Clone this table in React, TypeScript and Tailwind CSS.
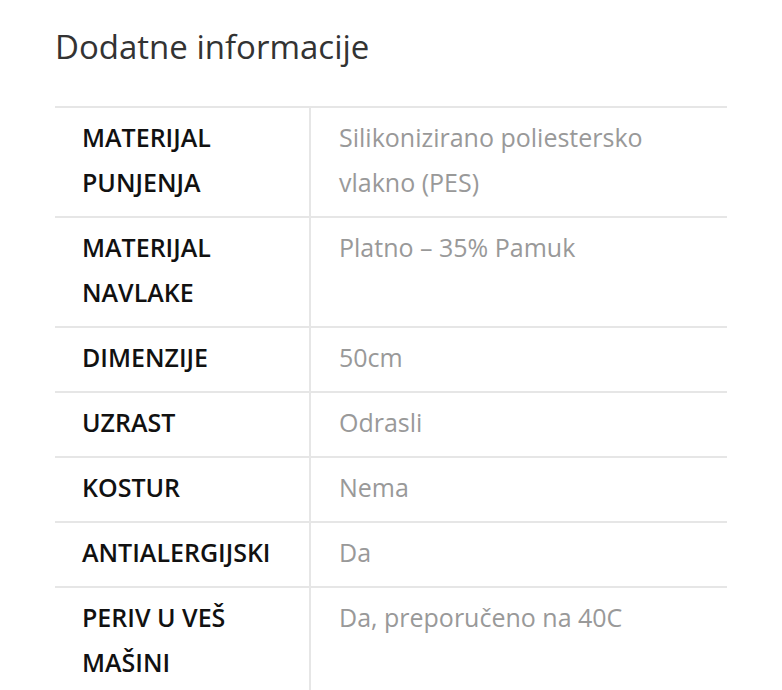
import React from "react";

type Row = { label: string; value: string };

const ROWS: Row[] = [
  { label: "MATERIJAL PUNJENJA", value: "Silikonizirano poliestersko vlakno (PES)" },
  { label: "MATERIJAL NAVLAKE", value: "Platno – 35% Pamuk" },
  { label: "DIMENZIJE", value: "50cm" },
  { label: "UZRAST", value: "Odrasli" },
  { label: "KOSTUR", value: "Nema" },
  { label: "ANTIALERGIJSKI", value: "Da" },
  { label: "PERIV U VEŠ MAŠINI", value: "Da, preporučeno na 40C" },
];

export default function App() {
  return (
    <div className="min-h-screen bg-white pl-[55px] pr-[55px] pt-[25px] font-['Open_Sans',sans-serif]">
      <h2 className="text-[33px] leading-[44px] font-normal text-[#333]">Dodatne informacije</h2>

      <table className="mt-[37px] w-full border-collapse">
        <tbody>
          {ROWS.map((r) => (
            <tr key={r.label} className="border-t-2 border-[#e6e6e6]">
              <th className="w-[255px] border-r-2 border-[#e6e6e6] pl-[27px] pr-4 pt-[7px] pb-[11px] text-left align-top text-[25px] leading-[45px] font-semibold text-[#111]">
                {r.label}
              </th>
              <td className="pl-[28px] pr-4 pt-[7px] pb-[11px] align-top text-[25px] leading-[45px] text-[#999]">
                {r.value}
              </td>
            </tr>
          ))}
        </tbody>
      </table>
    </div>
  );
}
